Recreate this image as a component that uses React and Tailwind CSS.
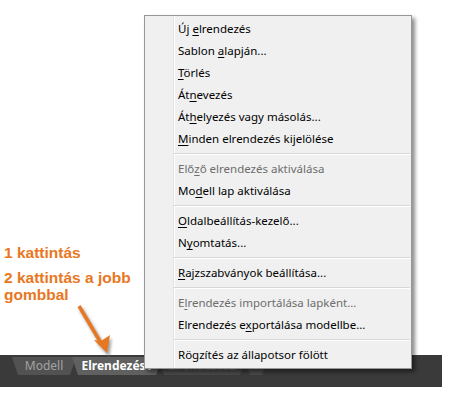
const MENU = [
  { pre: 'Új ', key: 'e', post: 'lrendezés' },
  { pre: 'Sablon ', key: 'a', post: 'lapján...' },
  { pre: '', key: 'T', post: 'örlés' },
  { pre: 'Át', key: 'n', post: 'evezés' },
  { pre: 'Át', key: 'h', post: 'elyezés vagy másolás...' },
  { pre: '', key: 'M', post: 'inden elrendezés kijelölése' },
  'sep',
  { pre: 'Elő', key: 'z', post: 'ő elrendezés aktiválása', disabled: true },
  { pre: 'Mo', key: 'd', post: 'ell lap aktiválása' },
  'sep',
  { pre: '', key: 'O', post: 'ldalbeállítás-kezelő...' },
  { pre: 'N', key: 'y', post: 'omtatás...' },
  'sep',
  { pre: '', key: 'R', post: 'ajzszabványok beállítása...' },
  'sep',
  { pre: 'E', key: 'l', post: 'rendezés importálása lapként...', disabled: true },
  { pre: 'Elrendezés e', key: 'x', post: 'portálása modellbe...' },
  'sep',
  { pre: 'Rögzítés az állapotsor fölött', key: '', post: '' },
];

function ContextMenu() {
  return (
    <div className="absolute left-[144px] top-[15px] w-[268px] border border-[#979797] bg-[#f0f0f0] py-[2px] shadow-[3px_3px_4px_rgba(0,0,0,0.45)] [font-family:'Noto_Sans',sans-serif] text-[11.5px]">
      <div className="absolute left-[28px] top-0 bottom-0 w-[2px] border-l border-[#e2e3e3] bg-white" />
      {MENU.map((item, i) =>
        item === 'sep' ? (
          <div key={i} className="relative ml-[29px] mr-[1px] flex h-[8px] flex-col justify-center">
            <div className="h-px bg-[#d7d7d7]" />
            <div className="h-px bg-white" />
          </div>
        ) : (
          <div
            key={i}
            className={`relative flex h-[22px] items-center pl-[33px] ${
              item.disabled ? 'text-[#6d6d6d]' : 'text-black'
            }`}
          >
            <span className="whitespace-pre">
              {item.pre}
              {item.key ? <span className="underline underline-offset-2">{item.key}</span> : null}
              {item.post}
            </span>
          </div>
        )
      )}
    </div>
  );
}

function Arrows() {
  return (
    <svg className="pointer-events-none absolute left-0 top-0" width="451" height="404">
      <defs>
        <filter id="sh" x="-20%" y="-50%" width="140%" height="200%">
          <feGaussianBlur stdDeviation="1.4" />
        </filter>
      </defs>
      <g fill="#777" stroke="#777" opacity="0.7" filter="url(#sh)" transform="translate(2,3)">
        <rect x="262" y="93" width="128" height="4" />
        <polygon points="250,95 266,88 263,95 266,102" />
        <rect x="312" y="219" width="78" height="4" />
        <polygon points="300,221 316,214 313,221 316,228" />
        <line x1="79" y1="306" x2="101" y2="343" strokeWidth="4" />
        <polygon points="107,353 95,340 102,341 109,336" />
      </g>
      <g fill="#e87722" stroke="#e87722">
        <rect x="262" y="93.5" width="128" height="3.5" stroke="none" />
        <polygon points="250,95 266,88 263,95 266,102" stroke="none" />
        <rect x="312" y="219.5" width="78" height="3.5" stroke="none" />
        <polygon points="300,221 316,214 313,221 316,228" stroke="none" />
        <line x1="79" y1="306" x2="101" y2="343" strokeWidth="3.5" />
        <polygon points="107,353 94,340 101,341 110,335" stroke="none" />
      </g>
    </svg>
  );
}

function Tab({ children, className }) {
  return (
    <div
      className={`flex h-[18px] items-center justify-center [clip-path:polygon(0_0,100%_0,calc(100%-6px)_100%,6px_100%)] ${className}`}
    >
      {children}
    </div>
  );
}

export default function App() {
  return (
    <div className="relative flex h-[404px] w-[451px] flex-col overflow-hidden bg-white">
      <div className="flex flex-col pl-[4px] pt-[244px] [font-family:'Liberation_Sans',Arial,sans-serif] text-[15.5px] font-bold leading-[17px] text-[#e87722]">
        <div>1 kattintás</div>
        <div className="mt-[8px]">2 kattintás a jobb</div>
        <div>gombbal</div>
      </div>

      <div className="mt-auto mb-[17px] flex h-[32px] w-[442px] items-start bg-[#3a3a3a] pl-[12px] pt-[2px] [font-family:'Noto_Sans',sans-serif] text-[12px]">
        <Tab className="w-[64px] bg-[#525252] text-[#a3a3a3]">Modell</Tab>
        <Tab className="-ml-[4px] w-[90px] bg-[#606060] font-bold text-white">Elrendezés1</Tab>
        <Tab className="-ml-[4px] w-[88px] bg-[#4a4a4a] text-[#6a6a6a]">Elrendezés2</Tab>
        <Tab className="-ml-[2px] w-[24px] bg-[#4a4a4a] text-[#777]">+</Tab>
      </div>

      <Arrows />

      <div className="absolute left-[397px] top-[85px] [font-family:'Liberation_Sans',Arial,sans-serif] text-[17px] font-bold text-[#e87722]">
        3
      </div>
      <div className="absolute left-[397px] top-[211px] [font-family:'Liberation_Sans',Arial,sans-serif] text-[17px] font-bold text-[#e87722]">
        4
      </div>

      <ContextMenu />
    </div>
  );
}
